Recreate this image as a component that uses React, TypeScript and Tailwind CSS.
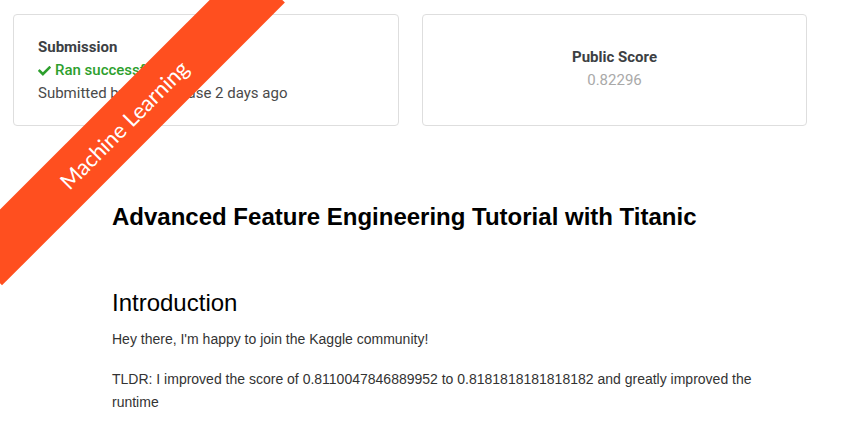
import React from "react";

function Check() {
  return (
    <svg width="13" height="11" viewBox="0 0 512 420" className="mr-[4px] shrink-0" aria-hidden>
      <path
        fill="#2d9f2d"
        d="M173.9 410.3L7.5 243.9c-10-10-10-26.2 0-36.2l36.2-36.2c10-10 26.2-10 36.2 0L192 283.6 432.1 43.5c10-10 26.2-10 36.2 0l36.2 36.2c10 10 10 26.2 0 36.2L210.1 410.3c-10 10-26.2 10-36.2 0z"
      />
    </svg>
  );
}

export default function App() {
  return (
    <div className="relative w-[843px] h-[425px] overflow-hidden bg-white">
      <div className="flex gap-[23px] pl-[13px] pt-[14px]" style={{ fontFamily: "Roboto, 'Liberation Sans', sans-serif" }}>
        <div className="w-[386px] h-[112px] rounded-[4px] border border-[#dedede] pl-[24px] pt-[21px] text-[15px] leading-[23px]">
          <div className="font-bold text-[#3c4043]">Submission</div>
          <div className="flex items-center font-medium text-[#2d9f2d]">
            <Check />
            Ran successfully
          </div>
          <div className="text-[#4a4a4a]">Submitted by Kevin Chase 2 days ago</div>
        </div>
        <div className="w-[385px] h-[112px] rounded-[4px] border border-[#dedede] flex flex-col items-center justify-center pb-[3px] text-[15px] leading-[23px]">
          <div className="font-bold text-[#3c4043]">Public Score</div>
          <div className="text-[#a9a9a9]">0.82296</div>
        </div>
      </div>

      <div className="pl-[112px] pt-[76px] w-[795px]" style={{ fontFamily: "'Liberation Sans', Arial, sans-serif" }}>
        <h1 className="text-[24px] leading-[29px] font-bold text-black">
          Advanced Feature Engineering Tutorial with Titanic
        </h1>
        <h2 className="mt-[57px] text-[24px] leading-[29px] text-black">Introduction</h2>
        <p className="mt-[10px] text-[14px] leading-[24px] text-[#333]">
          Hey there, I'm happy to join the Kaggle community!
        </p>
        <p className="mt-[17px] text-[14px] leading-[23px] text-[#333]">
          TLDR: I improved the score of 0.8110047846889952 to 0.8181818181818182 and greatly improved the runtime
        </p>
      </div>

      <div
        className="absolute left-[-76px] top-[97px] w-[400px] h-[55px] bg-[#ff4f1f] flex items-center justify-center text-white text-[22px] rotate-[-45deg]"
        style={{ fontFamily: "Lato, 'Open Sans', sans-serif" }}
      >
        Machine Learning
      </div>
    </div>
  );
}
